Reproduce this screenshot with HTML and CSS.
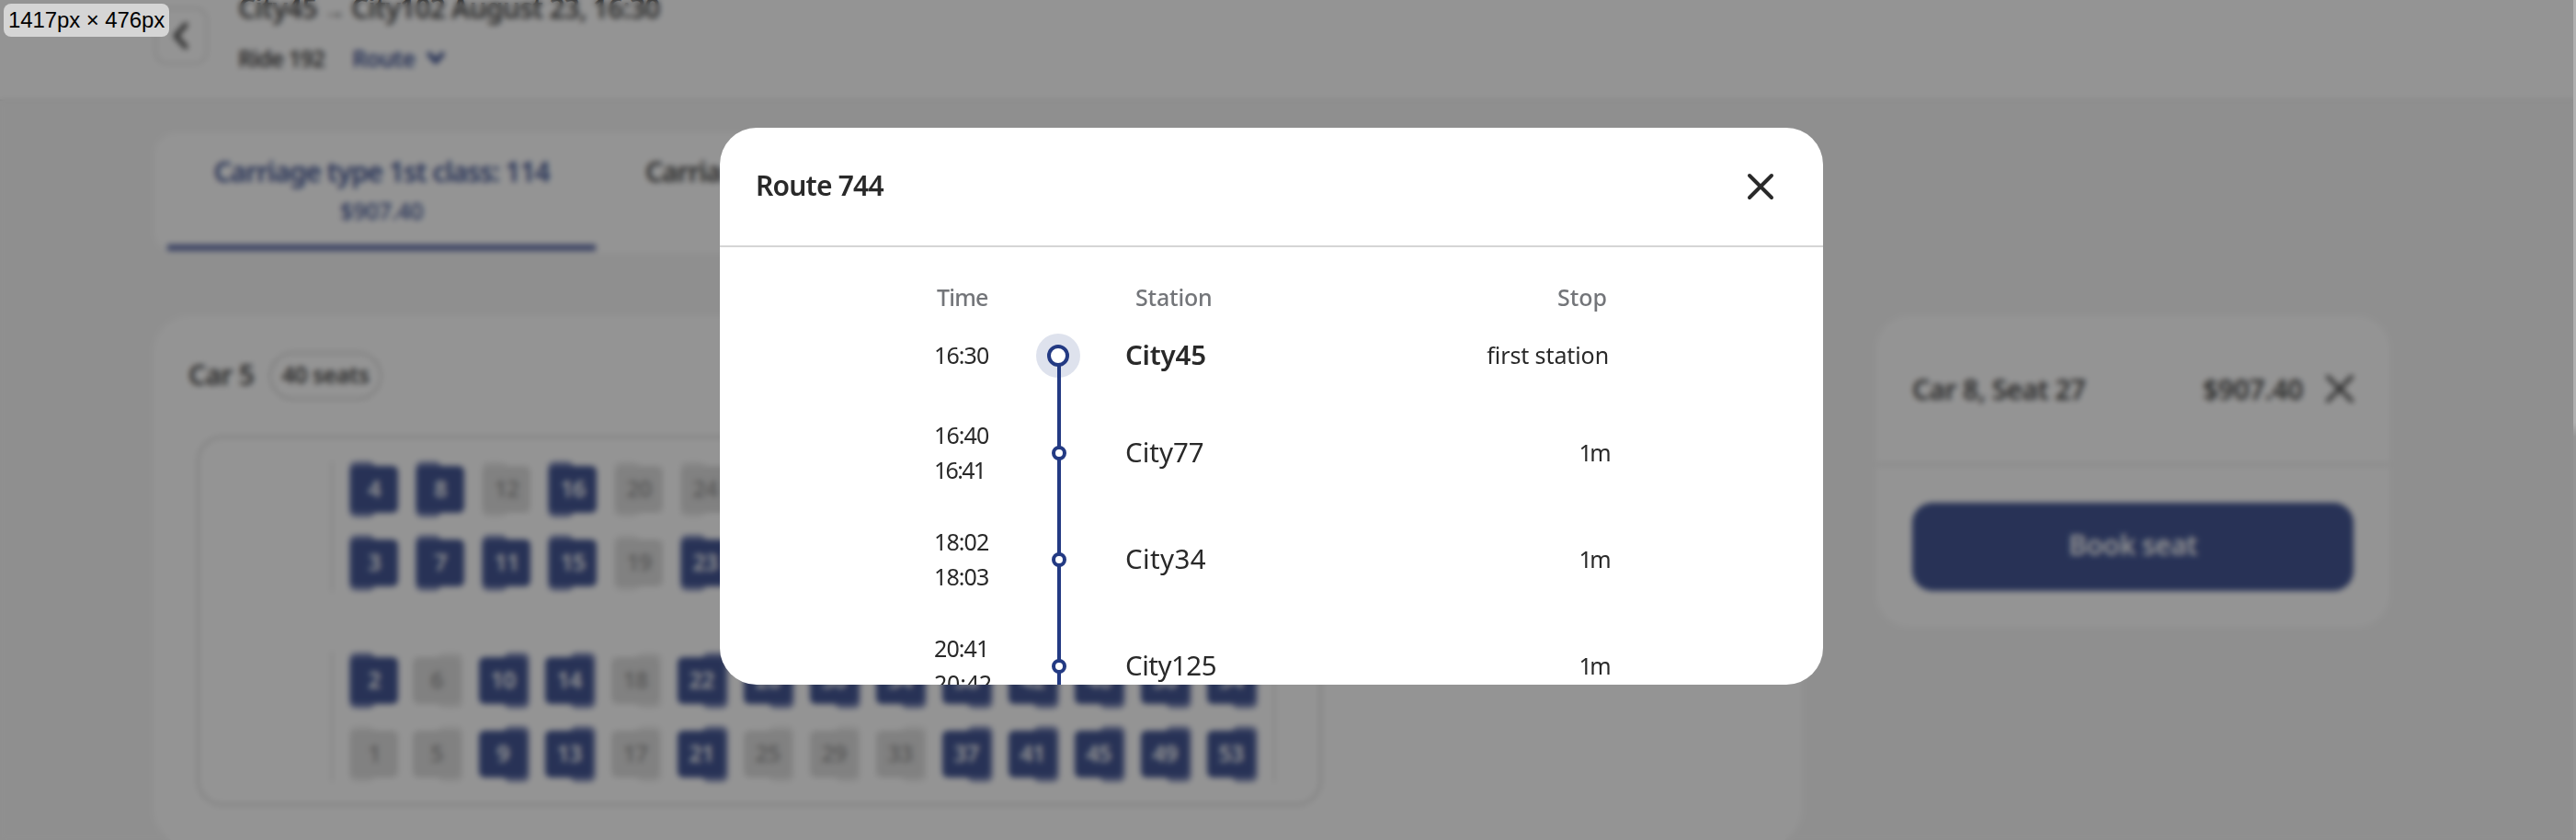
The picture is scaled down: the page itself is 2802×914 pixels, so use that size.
FILE: index.html
```html
<!DOCTYPE html>
<html lang="en">
<head>
<meta charset="utf-8">
<title>Route 744</title>
<link rel="stylesheet" href="styles.css">
</head>
<body>
<div class="page">
  <header class="top">
    <div class="back"><svg width="22" height="34" viewBox="0 0 22 34"><path d="M17 5 6 17l11 12"/></svg></div>
    <div class="trip">
      <div class="title">City45 <span class="arrow">→</span> City102 August 23, 16:30</div>
      <div class="sub"><span class="ride">Ride 192</span><span class="route-link">Route</span><svg width="20" height="16" viewBox="0 0 20 16"><path d="m3 4 7 8 7-8"/></svg></div>
    </div>
  </header>
  <div class="tabs">
    <div class="tab tab-active"><div class="tab-name">Carriage type 1st class: 114</div><div class="tab-price">$907.40</div></div>
    <div class="tab"><div class="tab-name">Carria</div></div>
  </div>
  <div class="columns">
    <section class="car">
      <div class="car-head"><span class="car-name">Car 5</span><span class="pill">40 seats</span></div>
      <div class="frame">
        <div class="group">
          <div class="row">
            <i class="seat">4</i><i class="seat">8</i><i class="seat off">12</i><i class="seat">16</i><i class="seat off">20</i><i class="seat off">24</i>
          </div>
          <div class="row">
            <i class="seat">3</i><i class="seat">7</i><i class="seat">11</i><i class="seat">15</i><i class="seat off">19</i><i class="seat">23</i>
          </div>
        </div>
        <div class="group rear">
          <div class="row">
            <i class="seat">2</i><i class="seat off">6</i><i class="seat">10</i><i class="seat">14</i><i class="seat off">18</i><i class="seat">22</i><i class="seat">26</i><i class="seat">30</i><i class="seat">34</i><i class="seat">38</i><i class="seat">42</i><i class="seat">46</i><i class="seat">50</i><i class="seat">54</i>
          </div>
          <div class="row">
            <i class="seat off">1</i><i class="seat off">5</i><i class="seat">9</i><i class="seat">13</i><i class="seat off">17</i><i class="seat">21</i><i class="seat off">25</i><i class="seat off">29</i><i class="seat off">33</i><i class="seat">37</i><i class="seat">41</i><i class="seat">45</i><i class="seat">49</i><i class="seat">53</i>
          </div>
        </div>
      </div>
    </section>
    <aside class="cart">
      <div class="cart-item">
        <span class="cart-name">Car 8, Seat 27</span><span class="cart-price">$907.40</span>
        <svg width="34" height="34" viewBox="0 0 34 34"><path d="M4 4 30 30M30 4 4 30"/></svg>
      </div>
      <div class="cart-foot"><div class="book">Book seat</div></div>
    </aside>
  </div>
</div>

<div class="overlay">
  <div class="modal">
    <div class="modal-head">
      <div class="modal-title">Route 744</div>
      <svg width="40" height="40" viewBox="0 0 40 40"><path d="M8 8 32 32M32 8 8 32"/></svg>
    </div>
    <div class="stops">
      <div class="stop heads"><div class="h-time">Time</div><div></div><div class="h-station">Station</div><div class="h-stop">Stop</div></div>
      <div class="stop first">
        <div class="time">16:30</div>
        <div class="rail"><span class="halo"><span class="ring"></span></span></div>
        <div class="city bold">City45</div><div class="wait">first station</div>
      </div>
      <div class="stop">
        <div class="time">16:40<br><span class="tight">16:41</span></div>
        <div class="rail"><span class="dot"></span></div>
        <div class="city">City77</div><div class="wait min">1m</div>
      </div>
      <div class="stop">
        <div class="time">18:02<br>18:03</div>
        <div class="rail"><span class="dot"></span></div>
        <div class="city wide">City34</div><div class="wait min">1m</div>
      </div>
      <div class="stop">
        <div class="time">20:41<br><span class="loose">20:42</span></div>
        <div class="rail"><span class="dot"></span></div>
        <div class="city narrow">City125</div><div class="wait min">1m</div>
      </div>
    </div>
  </div>
</div>
<div class="scroll"></div>
<div class="size-tag">1417px × 476px</div>
</body>
</html>
```
FILE: styles.css
```css
* { box-sizing: border-box; }
body {
  margin: 0;
  width: 2802px;
  height: 914px;
  overflow: hidden;
  position: relative;
  font-family: "Noto Sans", "Open Sans", sans-serif;
  color: #292929;
  background: #f5f5f5;
}
svg { fill: none; stroke: currentColor; stroke-linecap: round; stroke-linejoin: round; flex: none; }

.page { height: 914px; overflow: hidden; }

/* Trip header */
.top {
  height: 110px;
  padding-left: 168px;
  display: flex;
  background: #fff;
  border-bottom: 2px solid #e4e4e4;
}
.back {
  width: 58px;
  height: 62px;
  margin: 8px 33px 0 0;
  border: 2px solid #d8d8d8;
  border-radius: 14px;
  display: flex;
  align-items: center;
  justify-content: center;
}
.back svg { stroke-width: 5; margin-right: 2px; }
.trip { margin-top: -12px; white-space: nowrap; }
.title { font-size: 30px; font-weight: 600; line-height: 42px; letter-spacing: -0.8px; }
.arrow { font-size: 24px; }
.sub { display: flex; align-items: center; height: 40px; margin-top: 11px; font-size: 25px; font-weight: 600; line-height: 40px; }
.ride { width: 124px; letter-spacing: -1.1px; }
.route-link { width: 81px; color: #233a83; letter-spacing: -0.8px; }
.sub svg { color: #233a83; stroke-width: 5; }

/* Carriage tabs */
.tabs {
  width: 1792px;
  height: 130px;
  margin: 35px 0 0 168px;
  padding: 0 14px;
  display: flex;
  background: #fff;
  border-radius: 24px;
}
.tab { width: 466px; padding-top: 20px; text-align: center; white-space: nowrap; }
.tab + .tab { text-align: left; padding-left: 54px; }
.tab-active { color: #233a83; border-bottom: 7px solid #4a5a9c; height: 128px; }
.tab-name { font-size: 30px; font-weight: 600; line-height: 44px; letter-spacing: -1.1px; }
.tab-price { font-size: 25px; line-height: 41px; font-weight: 500; letter-spacing: -0.3px; }

.columns { display: flex; align-items: flex-start; gap: 81px; margin: 69px 0 0 167px; }

/* Car plan */
.car { width: 1793px; height: 576px; flex: none; padding: 39px 0 0 38px; background: #fff; border-radius: 40px; }
.car-head { display: flex; align-items: center; gap: 15px; height: 51px; }
.car-name { font-size: 30px; font-weight: 600; line-height: 51px; letter-spacing: -0.7px; padding-bottom: 3px; width: 73px; white-space: nowrap; }
.pill {
  width: 122px;
  height: 52px;
  border: 2px solid #c6c6c6;
  border-radius: 26px;
  font-size: 25px;
  font-weight: 600;
  line-height: 45px;
  letter-spacing: -0.5px;
  text-align: center;
}
.frame { width: 1224px; height: 403px; margin: 40px 0 0 9px; padding: 25px 0 0 143px; border: 3px solid #dcdcdc; border-radius: 28px; }
.group { height: 142px; width: 1027px; padding: 5px 0 0 19px; border-left: 2px solid #dcdcdc; }
.rear { margin-top: 65px; padding-top: 6px; border-right: 2px solid #dcdcdc; }
.row { display: flex; gap: 20px; margin-bottom: 29px; position: relative; z-index: 0; }
.rear .seat:first-child { margin-right: -4px; }
.seat {
  width: 52px;
  height: 51px;
  flex: none;
  position: relative;
  background: #263b83;
  border-radius: 6px;
  color: #fff;
  font: 600 25px/48px "Noto Sans", sans-serif;
  text-align: center;
  letter-spacing: -0.8px;
}
.seat::before {
  content: "";
  position: absolute;
  z-index: -1;
  left: -1px;
  top: -5px;
  width: 28px;
  height: 61px;
  background: #7682b4;
  border-radius: 7px;
}
.rear .seat:not(:first-child)::before { left: 27px; }
.off { background: #d8d8d8; color: #8c8c8c; }
.off::before { background: #ebebeb; }

/* Selected seat */
.cart { width: 558px; height: 338px; flex: none; background: #fff; border-radius: 36px; }
.cart-item { height: 163px; padding: 0 37px 2px 39px; display: flex; align-items: center; border-bottom: 3px solid #e8e8e8; font-size: 30px; font-weight: 600; letter-spacing: -0.6px; }
.cart-name { flex: 1; }
.cart-price { width: 132px; letter-spacing: -0.3px; }
.cart-item svg { stroke-width: 4; }
.cart-foot { padding: 40px 39px 0 39px; }
.book { height: 96px; border-radius: 22px; background: #263b83; color: #fff; font-size: 30px; font-weight: 600; line-height: 91px; text-align: center; letter-spacing: -0.5px; }

/* Dimmed layer with the dialog */
.overlay {
  position: absolute;
  inset: 0;
  padding: 139px 36px 0 0;
  display: flex;
  justify-content: center;
  align-items: flex-start;
  background: rgba(41, 41, 41, 0.5);
  backdrop-filter: blur(3.4px);
}
.modal { width: 1200px; height: 606px; overflow: hidden; background: #fff; border-radius: 40px; }
.modal-head { height: 130px; padding: 0 48px 0 39px; display: flex; align-items: center; justify-content: space-between; border-bottom: 2px solid #d5d5d5; }
.modal-title { font-size: 30px; font-weight: 600; padding-bottom: 4px; letter-spacing: -0.8px; }
.modal-head svg { stroke-width: 4; }

.stops { width: 967px; padding: 34px 0 0 233px; }
.stop { height: 116px; display: grid; grid-template-columns: 95px 80px 1fr 200px; align-items: center; white-space: nowrap; }
.heads { height: 40px; font-size: 25px; font-weight: 500; line-height: 39px; color: #737579; }
.h-time { padding-left: 3px; letter-spacing: -0.8px; }
.h-station { padding-left: 44px; letter-spacing: -0.2px; }
.h-stop { text-align: right; padding-right: 2px; }
.first { height: 88px; margin-bottom: 4px; }
.time { font-size: 25px; line-height: 38px; letter-spacing: -0.9px; padding-bottom: 2px; }
.tight { letter-spacing: -1.7px; }
.loose { letter-spacing: -0.2px; }
.city { font-size: 29.5px; padding: 0 0 4px 33px; letter-spacing: 0; }
.bold { font-weight: 600; letter-spacing: -0.2px; }
.wide { letter-spacing: 0.4px; }
.narrow { letter-spacing: -0.5px; }
.wait { font-size: 25px; text-align: right; padding-bottom: 3px; letter-spacing: -0.1px; }
.min { letter-spacing: -2.6px; }

.rail { align-self: stretch; display: flex; align-items: center; justify-content: center; background: linear-gradient(#233a83, #233a83) 39px 0 / 4px 100% no-repeat; }
.first .rail { margin-bottom: -4px; padding-bottom: 4px; background-position: 39px 44px; }
.halo { width: 48px; height: 48px; border-radius: 50%; background: rgba(35, 58, 131, 0.15); display: flex; align-items: center; justify-content: center; }
.ring { width: 24px; height: 24px; border: 4px solid #233a83; border-radius: 50%; background: #fff; }
.dot { width: 16px; height: 16px; margin-left: 1px; border: 4px solid #233a83; border-radius: 50%; background: #fff; }

.scroll { position: absolute; right: 0; top: 0; width: 3px; height: 914px; background: linear-gradient(#b0b0b0 0 460px, #949494 475px); }
.size-tag {
  position: absolute;
  left: 4px;
  top: 4px;
  width: 180px;
  height: 36px;
  border-radius: 8px;
  background: #d5d5d5;
  color: #000;
  font: 24px/36px "Liberation Sans", Arial, sans-serif;
  letter-spacing: -0.1px;
  text-align: center;
  white-space: nowrap;
}
```
